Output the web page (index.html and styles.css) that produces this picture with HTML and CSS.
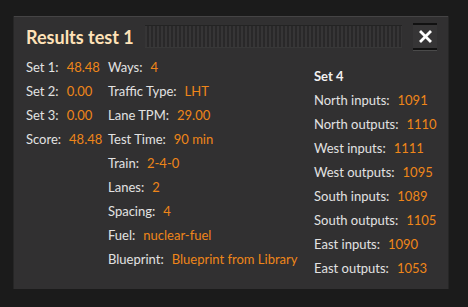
FILE: index.html
```html
<!DOCTYPE html>
<html lang="en">
<head>
    <meta charset="UTF-8">
    <title>Results test 1</title>
    <link rel="stylesheet" href="styles.css">
</head>
<body>
    <div class="frame">
        <div class="titlebar">
            <h1 class="title">Results test 1</h1>
            <div class="drag-handle"></div>
            <button class="close-btn">
                <svg width="13" height="13" viewBox="0 0 13 13">
                    <path d="M2 2 L11 11 M11 2 L2 11" stroke="#fff" stroke-width="2.8" stroke-linecap="square"/>
                </svg>
            </button>
        </div>

        <div class="content">
            <!-- 左侧：分数 -->
            <div class="col scores">
                <div class="row"><span class="label">Set 1:</span><span class="value">48.48</span></div>
                <div class="row"><span class="label">Set 2:</span><span class="value">0.00</span></div>
                <div class="row"><span class="label">Set 3:</span><span class="value">0.00</span></div>
                <div class="row"><span class="label">Score:</span><span class="value">48.48</span></div>
            </div>

            <!-- 中间：测试参数 -->
            <div class="col params">
                <div class="row"><span class="label">Ways:</span><span class="value">4</span></div>
                <div class="row"><span class="label">Traffic Type:</span><span class="value">LHT</span></div>
                <div class="row"><span class="label">Lane TPM:</span><span class="value">29.00</span></div>
                <div class="row"><span class="label">Test Time:</span><span class="value">90 min</span></div>
                <div class="row"><span class="label">Train:</span><span class="value">2-4-0</span></div>
                <div class="row"><span class="label">Lanes:</span><span class="value">2</span></div>
                <div class="row"><span class="label">Spacing:</span><span class="value">4</span></div>
                <div class="row"><span class="label">Fuel:</span><span class="value">nuclear-fuel</span></div>
                <div class="row"><span class="label">Blueprint:</span><span class="value">Blueprint from Library</span></div>
            </div>

            <!-- 右侧：Set 4 统计 -->
            <div class="col set-stats">
                <div class="row heading">Set 4</div>
                <div class="row"><span class="label">North inputs:</span><span class="value">1091</span></div>
                <div class="row"><span class="label">North outputs:</span><span class="value">1110</span></div>
                <div class="row"><span class="label">West inputs:</span><span class="value">1111</span></div>
                <div class="row"><span class="label">West outputs:</span><span class="value">1095</span></div>
                <div class="row"><span class="label">South inputs:</span><span class="value">1089</span></div>
                <div class="row"><span class="label">South outputs:</span><span class="value">1105</span></div>
                <div class="row"><span class="label">East inputs:</span><span class="value">1090</span></div>
                <div class="row"><span class="label">East outputs:</span><span class="value">1053</span></div>
            </div>
        </div>
    </div>
</body>
</html>
```

FILE: styles.css
```css
* {
    margin: 0;
    padding: 0;
    box-sizing: border-box;
    font-family: Lato, 'Liberation Sans', sans-serif;
}

:root {
    --bg: #1b1b1b;
    --panel: #313031;
    --label: #e2e2e2;
    --value: #ef8619;
    --title: #ffe2b8;
}

body {
    background-color: var(--bg);
    padding: 16px 20px 0 14px;
}

/* 主面板 */
.frame {
    width: 434px;
    height: 273px;
    background-color: var(--panel);
    padding: 6px 11px 9px 12px;
    border-top: 1px solid #454445;
    box-shadow: 0 2px 0 #0e0e0e, 1px 0 0 #262626, -1px 0 0 #262626;
}

/* 标题栏 */
.titlebar {
    display: flex;
    align-items: center;
    height: 27px;
}

.title {
    color: var(--title);
    font-size: 18px;
    font-weight: 700;
    white-space: nowrap;
    padding-top: 1px;
}

.drag-handle {
    flex: 1;
    height: 23px;
    margin: 0 11px 0 11px;
    background: repeating-linear-gradient(90deg, #363536 0, #363536 2px, #292829 2px, #292829 4px);
    border-top: 1px solid #232323;
    border-bottom: 1px solid #383838;
}

.close-btn {
    width: 24px;
    height: 27px;
    background-color: #363536;
    border: none;
    border-top: 2px solid #111;
    border-bottom: 2px solid #111;
    box-shadow: 0 1px 0 #4a4a4a;
    display: flex;
    align-items: center;
    justify-content: center;
    cursor: pointer;
}

/* 内容区 */
.content {
    display: flex;
    margin-top: 5px;
    font-size: 13px;
}

.row {
    height: 24px;
    line-height: 24px;
    white-space: nowrap;
}

.label {
    color: var(--label);
    margin-right: 8px;
}

.value {
    color: var(--value);
}

.scores {
    width: 82px;
}

.params {
    width: 206px;
}

.set-stats {
    margin-top: 9px;
}

.heading {
    color: #f2f2f2;
    font-weight: 700;
}
```
